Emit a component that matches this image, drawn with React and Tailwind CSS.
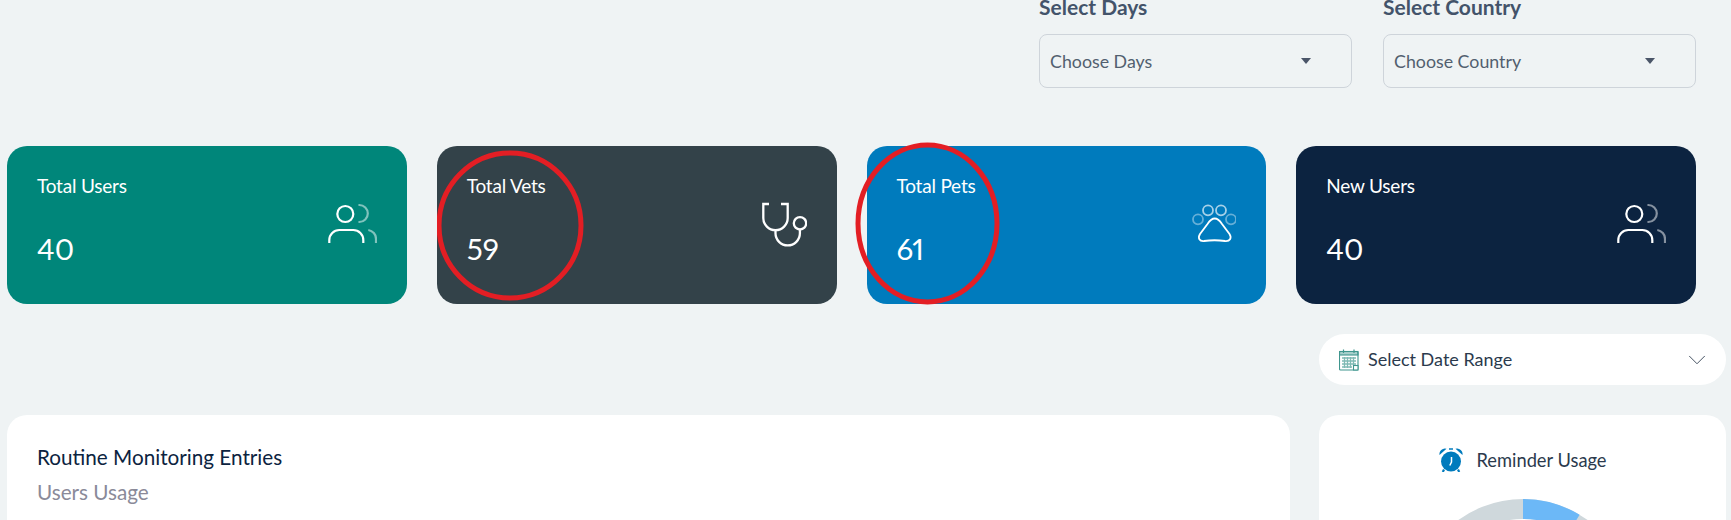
import { ChevronDown } from 'lucide-react';

function UsersIcon() {
  return (
    <svg width="50" height="50" viewBox="0 0 50 50" fill="none" stroke="white" strokeWidth="2.2" strokeLinecap="round">
      <circle cx="18.3" cy="14" r="8" />
      <path d="M2.3 43 V40 A10 10 0 0 1 12.3 30 H26.3 A10 10 0 0 1 36.3 40 V43" strokeLinecap="butt" />
      <path d="M32.3 5 A8.5 8.5 0 0 1 32.3 22" opacity="0.5" />
      <path d="M41.3 30 A9 9 0 0 1 49 39 V43" opacity="0.5" strokeLinecap="butt" />
    </svg>
  );
}

function StethoscopeIcon() {
  return (
    <svg width="50" height="50" viewBox="0 0 50 50" fill="none" stroke="white" strokeWidth="2.3">
      <path d="M12 4 H6.3 V18 A12.2 12.2 0 0 0 30.7 18 V4 H24" />
      <path d="M18.5 30.2 V33.2 A12.2 12.2 0 0 0 42.9 33.2 V29.7" />
      <circle cx="43" cy="23.3" r="6.2" />
    </svg>
  );
}

function PawIcon() {
  return (
    <svg width="50" height="50" viewBox="0 0 50 50" fill="none" stroke="white" strokeWidth="1.8">
      <circle cx="22" cy="10.3" r="5" opacity="0.65" />
      <circle cx="35" cy="10.3" r="5" opacity="0.65" />
      <circle cx="12" cy="19.3" r="5" opacity="0.4" />
      <circle cx="45" cy="19.3" r="5" opacity="0.4" />
      <path d="M28.7 18.5 C25.5 18.5 23.5 21 21.5 24 L14 34 C11.5 38 13.5 41.5 18 41 C25 40 32 40 39 41 C44 41.5 46 38 43.5 34 L36 24 C34 21 32 18.5 28.7 18.5 Z" />
    </svg>
  );
}

function CalendarIcon() {
  return (
    <svg width="20" height="22" viewBox="0 0 20 22" fill="none" stroke="#3f968e" strokeWidth="1.1">
      <rect x="0.5" y="2.5" width="18.5" height="18.5" rx="1" />
      <rect x="0.5" y="2.5" width="18.5" height="3.5" fill="#3f968e" fillOpacity="0.45" />
      <path d="M4.5 0.5 V4 M15 0.5 V4" strokeWidth="1.2" />
      <path d="M3 9 H17 M3 12 H17 M3 15 H17 M3 18 H13 M5.5 8 V19 M8.5 8 V19 M11.5 8 V19 M14.5 8 V16" stroke="#7fbab4" strokeWidth="1.3" />
      <rect x="14.5" y="16.5" width="4.5" height="4.5" fill="white" />
    </svg>
  );
}

function AlarmIcon() {
  return (
    <svg width="24" height="24" viewBox="0 0 24 24">
      <circle cx="12" cy="13.5" r="10" fill="#007bbd" />
      <path d="M0.5 7 A5.5 5.5 0 0 1 7.5 0.8 Z M23.5 7 A5.5 5.5 0 0 0 16.5 0.8 Z" fill="#007bbd" />
      <path d="M10 1 H14" stroke="#007bbd" strokeWidth="1.5" />
      <path d="M5 21.5 L3.8 24 M19 21.5 L20.2 24" stroke="#007bbd" strokeWidth="2.2" />
      <path d="M12.5 9 V14 L10.8 17.5" fill="none" stroke="white" strokeWidth="1.5" />
    </svg>
  );
}

function Select({ label, placeholder }) {
  return (
    <div className="w-[313px]">
      <div className="text-[21px] leading-[24px] font-bold text-[#43536a] mb-[15px]">{label}</div>
      <div className="h-[54px] flex items-center justify-between pl-[10px] pr-[40px] border border-[#ced4da] rounded-lg">
        <span className="text-[17.8px] text-[#525f6f]">{placeholder}</span>
        <svg width="10" height="6" viewBox="0 0 10 6"><path d="M0 0 H10 L5 6 Z" fill="#4a5568" /></svg>
      </div>
    </div>
  );
}

function StatCard({ title, value, bg, icon, ring }) {
  return (
    <div className={`relative h-[158px] rounded-[20px] flex items-center justify-between pl-[30px] pr-[30px] text-white ${bg}`}>
      <div className="pb-[9px]">
        <div className="text-[19px] leading-[24px] tracking-[-0.2px]">{title}</div>
        <div className="text-[29.5px] leading-[36px] mt-[33px] proportional-nums">{value}</div>
      </div>
      {icon}
      {ring}
    </div>
  );
}

export default function App() {
  return (
    <div className="h-[520px] overflow-hidden bg-[#eff3f4] font-['Lato',sans-serif]">
      <div className="flex justify-end gap-[31px] pr-[35px] -mt-[5px]">
        <Select label="Select Days" placeholder="Choose Days" />
        <Select label="Select Country" placeholder="Choose Country" />
      </div>

      <div className="grid grid-cols-4 gap-[30px] pl-[7px] pr-[35px] mt-[58px]">
        <StatCard title="Total Users" value="40" bg="bg-[#00867a]" icon={<UsersIcon />} />
        <StatCard
          title="Total Vets"
          value="59"
          bg="bg-[#334249]"
          icon={<StethoscopeIcon />}
          ring={
            <svg className="absolute left-0 top-[4px]" width="148" height="152" viewBox="0 0 148 152" fill="none">
              <ellipse cx="73" cy="75.5" rx="71" ry="72.5" stroke="#e31e24" strokeWidth="5" />
            </svg>
          }
        />
        <StatCard
          title="Total Pets"
          value="61"
          bg="bg-[#007bbd]"
          icon={<PawIcon />}
          ring={
            <svg className="absolute left-[-12px] top-[-4px]" width="146" height="164" viewBox="0 0 146 164" fill="none">
              <ellipse cx="72.5" cy="81.5" rx="69.5" ry="78.5" stroke="#e31e24" strokeWidth="5" />
            </svg>
          }
        />
        <StatCard title="New Users" value="40" bg="bg-[#0c2340]" icon={<UsersIcon />} />
      </div>

      <div className="flex justify-end pr-[5px] mt-[30px]">
        <div className="w-[407px] h-[51px] bg-white rounded-full flex items-center justify-between pl-[20px] pr-[14px]">
          <div className="flex items-center gap-[9px]">
            <CalendarIcon />
            <span className="text-[18px] text-[#2b3a4d]">Select Date Range</span>
          </div>
          <ChevronDown className="w-[30px] h-[30px] text-[#2b3a4d]" strokeWidth={0.7} />
        </div>
      </div>

      <div className="flex gap-[29px] pl-[7px] pr-[5px] mt-[30px]">
        <div className="flex-1 h-[200px] bg-white rounded-[20px] pl-[30px] pt-[30px]">
          <div className="text-[20.7px] leading-[24px] text-[#0c2340]">Routine Monitoring Entries</div>
          <div className="text-[20.7px] leading-[24px] text-[#8a8a99] mt-[11px]">Users Usage</div>
        </div>
        <div className="w-[407px] h-[300px] bg-white rounded-[20px] pt-[33px]">
          <div className="flex items-center justify-center gap-[14px] h-[24px]">
            <AlarmIcon />
            <span className="text-[18.3px] text-[#2b3a4d] pt-[2px]">Reminder Usage</span>
          </div>
          <svg className="mx-auto mt-[27px]" width="220" height="220" viewBox="0 0 220 220" fill="none">
            <circle cx="110" cy="110" r="100" stroke="#cfd8dc" strokeWidth="20" />
            <circle cx="110" cy="110" r="100" stroke="#6cb8f7" strokeWidth="20" strokeDasharray="54 574" transform="rotate(-90 110 110)" />
          </svg>
        </div>
      </div>
    </div>
  );
}
